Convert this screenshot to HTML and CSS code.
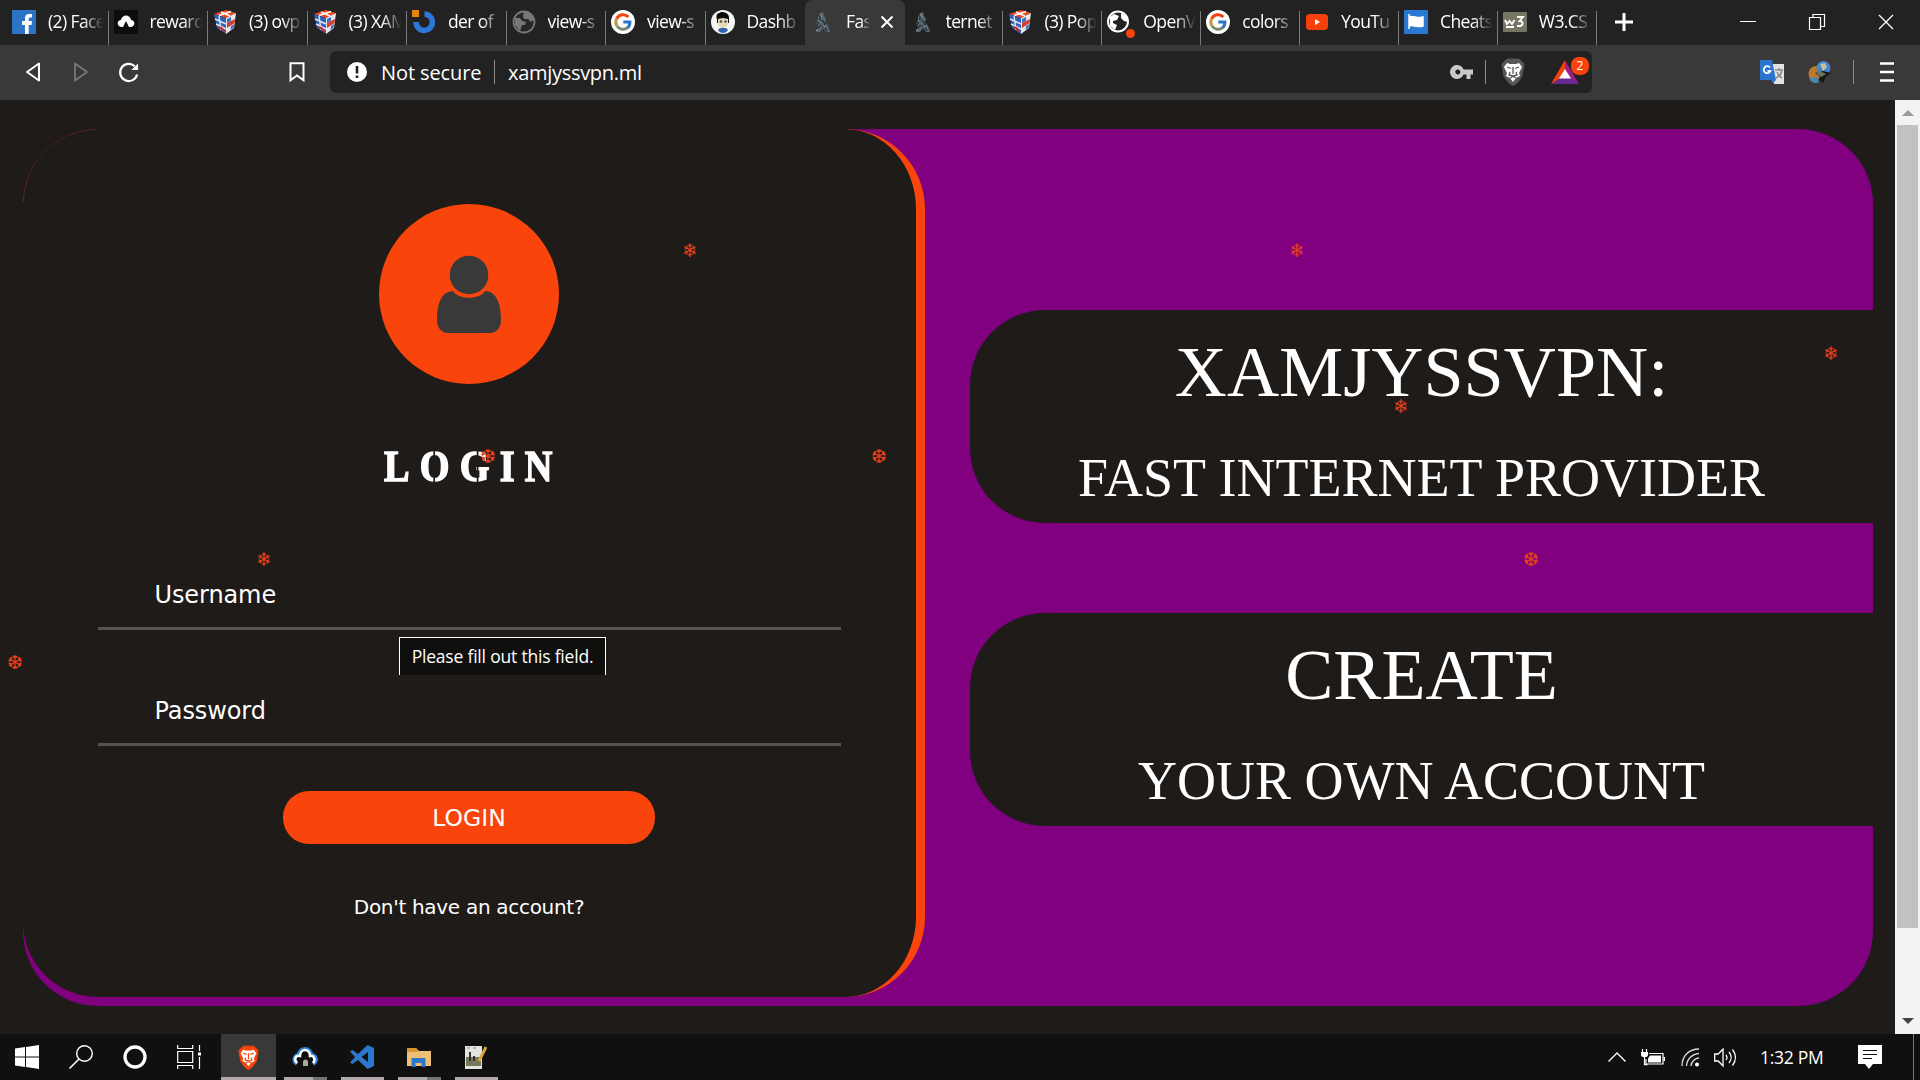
FILE: index.html
```html
<!DOCTYPE html>
<html lang="en">
<head>
    <meta charset="UTF-8">
    <meta name="viewport" content="width=device-width, initial-scale=1.0">
    <title>XAMJYSSVPN</title>
    <link rel="stylesheet" href="styles.css">
</head>
<body>
    <!-- shared icons -->
    <svg class="defs">
        <symbol id="google" viewBox="0 0 24 24">
            <circle cx="12" cy="12" r="12" fill="#fff"/>
            <path d="M5.6 8.7A7.3 7.3 0 0 1 17.4 7" fill="none" stroke="#f4430d" stroke-width="3"/>
            <path d="M5.6 8.7A7.3 7.3 0 0 0 6 16" fill="none" stroke="#c39a45" stroke-width="3"/>
            <path d="M6 16a7.3 7.3 0 0 0 10.5 1.8" fill="none" stroke="#7a8a6a" stroke-width="3"/>
            <path d="M12.3 12h6.6a7.3 7.3 0 0 1-2.4 5.8" fill="none" stroke="#2c74c9" stroke-width="3"/>
        </symbol>
        <symbol id="cube" viewBox="0 0 24 24">
            <path d="M1 4L13 0l10 3-10 5z" fill="#f4481c"/>
            <path d="M1 4l12 4v16L4 18z" fill="#2d62b8"/>
            <path d="M13 8l10-5-2 15-8 6z" fill="#e8e6ea"/>
            <path d="M8 2l9 4M6 5.500L18 1.500" stroke="#fff" stroke-width="1.600"/>
            <path d="M2 9l11 5M3 14l10 5M6 6l2 14" stroke="#dfe6f2" stroke-width="1.400"/>
            <path d="M14 13l8-4-.5 4-7.500 5z" fill="#d83a30"/>
            <path d="M14 9l4-2v4l-4 2zM18 16l3-2-.5 4-3 2z" fill="#3e70c0"/>
            <path d="M4 16l5 1 3 4v2z" fill="#c82a28"/>
        </symbol>
        <symbol id="knight" viewBox="0 0 24 24">
            <path d="M10 3l3-1 1 4 2 3-1 3 3 4 2 6h-4l-3-4-3 4H6l2-6-2-2 2-4 0-3 1-2z" fill="#596770"/>
            <path d="M10 4v6l-3 5M12 10l3 4-3 3M7 19l4-4M15 18l2 3" stroke="#2b3238" stroke-width="1.500" fill="none"/>
            <path d="M10 4l2 3M8 10l2 2M13 15l2 2M6 21l2-2" stroke="#8fa5b3" stroke-width="1"/>
        </symbol>
        <symbol id="lion" viewBox="0 0 24 28">
            <path d="M6 1h12l5 5-2 12-4 6-5 4-5-4-4-6L1 6z"/>
            <path d="M6 5l3 1h6l3-1 3 4-3 6 1 3-4 2-3 4-3-4-4-2 1-3-3-6z" fill="#fff" stroke="none"/>
            <path d="M6 9l4 1.500M18 9l-4 1.500M12 9v7M9 14l-1 3 4 1 4-1-1-3M9 20l3-1.500 3 1.500" fill="none" stroke-width="1.300"/>
        </symbol>
    </svg>

    <div class="tabs">
        <div class="tab first">
            <svg viewBox="0 0 24 24"><rect width="24" height="24" fill="#2d74c4"/><path d="M13 24v-9h-3v-4h3V8.500C13 5 15 4 17.500 4H20v3.500h-1.700c-1.300 0-1.600.6-1.600 1.600V11H20l-.5 4h-2.800v9z" fill="#fff"/></svg>
            <span>(2) Face</span>
        </div>
        <div class="tab">
            <svg viewBox="0 0 24 24"><rect width="24" height="24" fill="#0d0d0d"/><path d="M7.500 17C2 16 3 10 7 10c1-6 9-6 10 0 4 0 5 6 0 7h-2l-3-6-3 6z" fill="#fff"/></svg>
            <span>reward</span>
        </div>
        <div class="tab"><svg><use href="#cube"/></svg><span>(3) ovp</span></div>
        <div class="tab"><svg><use href="#cube"/></svg><span>(3) XAM</span></div>
        <div class="tab">
            <svg viewBox="0 0 24 24"><path d="M12.500 4A8.200 8.200 0 1 1 4 12" fill="none" stroke="#2c78d6" stroke-width="5.500"/><rect width="7" height="7" fill="#e8850c"/></svg>
            <span>der of</span>
        </div>
        <div class="tab">
            <svg viewBox="0 0 24 24"><circle cx="12" cy="12" r="10.500" fill="#262626" stroke="#777" stroke-width="1.800"/><path d="M3 8l5 0 2 3 4 1-1 3-3 0-2 6-5-6zM12 2l6 1 4 6-3 3-3-3-4 0-1-3z" fill="#777"/></svg>
            <span>view-s</span>
        </div>
        <div class="tab"><svg><use href="#google"/></svg><span>view-s</span></div>
        <div class="tab nosep">
            <svg viewBox="0 0 24 24"><circle cx="12" cy="12" r="12" fill="#f5f5f5"/><path d="M6 10C4 2 8 4 10 2c4 0 9 1 8 8v3H6z" fill="#0b0b0b"/><path d="M7 9l5-1 5 1v4a5 5 0 0 1-10 0z" fill="#e8d8b8"/><circle cx="10" cy="11.500" r="1.300" fill="#555"/><circle cx="14.500" cy="11.500" r="1.300" fill="#555"/><path d="M7 20c1-3 9-3 10 0-2 4-8 4-10 0z" fill="#2c66b0"/></svg>
            <span>Dashb</span>
        </div>
        <div class="tab active nosep">
            <svg><use href="#knight"/></svg><span>Fas</span>
            <svg class="tab-close" viewBox="0 0 14 14"><path d="M1.500 1.500l11 11M12.500 1.500l-11 11" stroke="#fff" stroke-width="2"/></svg>
        </div>
        <div class="tab"><svg><use href="#knight"/></svg><span>ternet</span></div>
        <div class="tab"><svg><use href="#cube"/></svg><span>(3) Pop</span></div>
        <div class="tab">
            <svg viewBox="0 0 24 24"><circle cx="11" cy="11.500" r="10" fill="#222" stroke="#fff" stroke-width="2"/><path d="M3 7l4-3 5 2-2 4-4 1 0 2 4 2-2 5-5-4zM14 3l5 3 2 6-4-1-3-3z" fill="#fff"/></svg>
            <i class="dot"></i>
            <span>OpenV</span>
        </div>
        <div class="tab"><svg><use href="#google"/></svg><span>colors</span></div>
        <div class="tab">
            <svg viewBox="0 0 24 24"><rect x="1" y="4" width="22" height="16" rx="4" fill="#f8400c"/><path d="M10 9l5 3-5 3z" fill="#fff"/></svg>
            <span>YouTu</span>
        </div>
        <div class="tab">
            <svg viewBox="0 0 24 24"><rect width="24" height="24" rx="1" fill="#2b78d2"/><path d="M5 4v15M5 7c4-2 8 2 14 0v9c-6 2-10-2-14 0z" fill="#fff" stroke="#fff" stroke-width="1.500"/></svg>
            <span>Cheats</span>
        </div>
        <div class="tab">
            <svg viewBox="0 0 24 24"><rect y="2" width="24" height="20" rx="1" fill="#777563"/><path d="M2 10l2 4 2.500-3 2.500 3 2.500-4M3 17h8M14 7h6l-3.500 4c5 0 4 6-2.500 5" fill="none" stroke="#fff" stroke-width="1.800"/></svg>
            <span>W3.CS</span>
        </div>
        <svg class="plus" viewBox="0 0 20 20"><path d="M10 1v18M1 10h18" stroke="#fff" stroke-width="3"/></svg>
        <div class="window-buttons">
            <svg viewBox="0 0 16 16"><path d="M0 7.500h16" stroke="#fff"/></svg>
            <svg viewBox="0 0 16 16"><path d="M.5 3.500h11v12H.500zM4 3V.500h11.500v12H12" fill="none" stroke="#fff" stroke-width="1.200"/></svg>
            <svg viewBox="0 0 16 16"><path d="M1 1l14 14M15 1L1 15" stroke="#fff" stroke-width="1.300"/></svg>
        </div>
    </div>

    <div class="toolbar">
        <div class="nav">
            <svg viewBox="0 0 16 20"><path d="M14 1.500v17L2 10z" fill="none" stroke="#fff" stroke-width="2" stroke-linejoin="round"/></svg>
            <svg class="forward" viewBox="0 0 16 20"><path d="M2 1.500v17L14 10z" fill="none" stroke="#777" stroke-width="1.800" stroke-linejoin="round"/></svg>
            <svg class="reload" viewBox="0 0 22 22"><path d="M19.500 13A9 9 0 1 1 17 4.500" fill="none" stroke="#fff" stroke-width="2.300"/><path d="M20.500 1.500v7h-7z" fill="#fff"/></svg>
            <svg class="bookmark" viewBox="0 0 16 20"><path d="M1.500 1.200h13v17L8 13.500l-6.500 4.700z" fill="none" stroke="#fff" stroke-width="2"/></svg>
        </div>
        <div class="address">
            <svg class="info" viewBox="0 0 20 20"><circle cx="10" cy="10" r="10" fill="#fff"/><path d="M10 4v7.500M10 13.500V16" stroke="#222" stroke-width="2.600"/></svg>
            <span class="secure">Not secure</span>
            <i class="line"></i>
            <span class="url">xamjyssvpn.ml</span>
            <svg class="key" viewBox="0 0 22 14"><path d="M6.500 0a7 7 0 1 0 6 9.500h3V14h4V9.500H22v-5h-9.500A7 7 0 0 0 6.500 0zm.3 4.500a2.500 2.500 0 1 1 0 5 2.500 2.500 0 0 1 0-5z" fill="#c9c9c9" fill-rule="evenodd"/></svg>
            <i class="line"></i>
            <svg class="shield"><use href="#lion"/></svg>
            <div class="rewards">
                <svg viewBox="0 0 28 24"><path d="M14 0L0 24l14-7z" fill="#f8400c"/><path d="M14 0l14 24-14-7z" fill="#971f86"/><path d="M0 24h28l-14-9z" fill="#662a91"/><path d="M14 9l6 9.500H8z" fill="#fff"/></svg>
                <b>2</b>
            </div>
        </div>
        <div class="extensions">
            <svg viewBox="0 0 24 24"><path d="M11 4h13v20H14z" fill="#e3e3e3"/><path d="M15 10h8M19 8v2M22 10c-1 5-4 7-6 8M17 12c1 3 3 5 5 6" stroke="#8a8a8a" stroke-width="1.500" fill="none"/><path d="M0 0h12l4 20-3 3-2-3H0z" fill="#2b74d0"/><path d="M10 7.500A3.500 3.500 0 1 0 10.500 11H7.500" fill="none" stroke="#fff" stroke-width="1.800"/></svg>
            <svg viewBox="0 0 24 24"><path d="M9 6C-2 6-2 20 8 22l4-5-5-4 5-3z" fill="#bd792b"/><circle cx="15.500" cy="8" r="7" fill="#4385c9"/><path d="M12 4l5-1 2 4-4 4z" fill="#cbbf9b"/><path d="M1 18c2 5 7 6 10 4l-1-5z" fill="#4a88b0"/><path d="M9 13l6-2 8 2-5 4-3 6-4-3 1-4z" fill="#161b17"/><path d="M8 13l4-2 6 3-5 3z" fill="#6d7565"/></svg>
            <i class="line"></i>
            <svg class="menu" viewBox="0 0 14 20"><path d="M0 1.500h14M0 10h14M0 18.500h14" stroke="#fff" stroke-width="2.400"/></svg>
        </div>
    </div>

    <div class="view">
        <div class="page">
            <div class="card">
                <form class="login">
                    <div class="avatar">
                        <svg viewBox="0 0 64 79"><circle cx="32" cy="20" r="19.300" fill="#393939"/><path d="M16 36C21 45 43 45 48 36c12 0 16 14 16 29 0 7-4 13-11 13H11C4 78 0 72 0 65c0-15 4-29 16-29z" fill="#393939"/></svg>
                    </div>
                    <h1>LOGIN</h1>
                    <div class="field">Username</div>
                    <div class="field">Password</div>
                    <button type="button">LOGIN</button>
                    <a>Don't have an account?</a>
                </form>
                <div class="side">
                    <div class="box">
                        <h2>XAMJYSSVPN:</h2>
                        <h3>FAST INTERNET PROVIDER</h3>
                    </div>
                    <div class="box">
                        <h2>CREATE</h2>
                        <h3>YOUR OWN ACCOUNT</h3>
                    </div>
                </div>
            </div>
            <div class="tooltip">Please fill out this field.</div>
            <i class="flake f1">❄</i>
            <i class="flake f2">❆</i>
            <i class="flake f3">❆</i>
            <i class="flake f4">❄</i>
            <i class="flake f5">❆</i>
            <i class="flake f6">❄</i>
            <i class="flake f7">❄</i>
            <i class="flake f8">❄</i>
            <i class="flake f9">❆</i>
        </div>
        <div class="scrollbar">
            <svg viewBox="0 0 12 6"><path d="M0 6l6-6 6 6z" fill="#999"/></svg>
            <div class="thumb"></div>
            <svg class="down" viewBox="0 0 12 6"><path d="M0 0h12L6 6z" fill="#444"/></svg>
        </div>
    </div>

    <div class="taskbar">
        <div class="start">
            <svg viewBox="0 0 24 24"><path d="M0 3.400L10 2v9.500H0zM11 1.900L24 0v11.500H11zM0 12.500h10V22L0 20.600zM11 12.500h13V24l-13-1.900z" fill="#fff"/></svg>
            <svg viewBox="0 0 24 24"><circle cx="15.500" cy="8.500" r="7.800" fill="none" stroke="#fff" stroke-width="1.400"/><path d="M10 14L.5 23.500" stroke="#fff" stroke-width="1.600"/></svg>
            <svg viewBox="0 0 24 24"><circle cx="12" cy="12" r="10" fill="none" stroke="#fff" stroke-width="3.300"/></svg>
            <svg viewBox="0 0 24 24"><path d="M.7 0v3.500h15V0M.7 6.500h15v11H.700zM.7 24v-3.500h15V24M22.500 0v6M22.500 12v12" fill="none" stroke="#fff" stroke-width="1.200"/><path d="M21 7.500h3v3h-3z" fill="#fff"/></svg>
        </div>
        <div class="app current"><svg class="orange"><use href="#lion"/></svg></div>
        <div class="app multi">
            <svg viewBox="0 0 24 24"><path d="M4 19C-1 15 2 10 6 10 6 2 18 2 18 10c5 0 7 6 2 9" fill="none" stroke="#3182d4" stroke-width="4"/><path d="M4 18C0 14 3 10 7 11 7 3 17 3 17 11c4-1 6 4 3 7" fill="none" stroke="#fff" stroke-width="2.500"/><path d="M10 21v-4a2.500 2.500 0 0 1 5 0v4z" fill="#aaa99d"/></svg>
        </div>
        <div class="app">
            <svg viewBox="0 0 24 24"><path d="M17.500 0L24 3v18l-6.500 3L8 15l-5.500 4L0 17.500 5 12 0 6.500 2.500 5 8 9zM18 7l-6.500 5 6.500 5z" fill="#2b78cc" fill-rule="evenodd"/></svg>
        </div>
        <div class="app multi">
            <svg viewBox="0 0 24 24"><path d="M0 3h9l3 3h12v15H0z" fill="#edc077"/><path d="M0 3h9l2 4H0z" fill="#d9962b"/><path d="M4.500 22v-9h14v9h-4v-4h-6v4z" fill="#2d78cb"/></svg>
        </div>
        <div class="app">
            <svg viewBox="0 0 24 24"><path d="M1 1h17v23H1z" fill="#e4e4df"/><path d="M2 12h15v9H2z" fill="#77775c"/><path d="M6 7v9M10 11v5" stroke="#333" stroke-width="2"/><path d="M22 2l-7 14" stroke="#d9a43b" stroke-width="3"/><path d="M3 3h3M9 3h3" stroke="#888"/></svg>
        </div>
        <div class="tray">
            <svg class="chevron" viewBox="0 0 18 10"><path d="M.5 9.500L9 1l8.500 8.500" fill="none" stroke="#fff" stroke-width="1.400"/></svg>
            <svg class="battery" viewBox="0 0 24 17"><path d="M8 4.500h14v10.500H5v-5" fill="none" stroke="#fff" stroke-width="1.200"/><path d="M9 6.500h11v7H7v-4z" fill="#fff"/><path d="M22.500 8h1.500v4h-1.500zM0 3h7v3c0 3-7 3-7 0z" fill="#fff"/><path d="M1.500 0v4M5.500 0v4M3.500 7v8.700h3" fill="none" stroke="#fff" stroke-width="1.200"/></svg>
            <svg class="wifi" viewBox="0 0 19 19"><path d="M1 18C1 8 8 1 18 1M5.500 18C6 11 11 6 18 5.500M10 18c0-4 4-8 8-8" fill="none" stroke="#ddd" stroke-width="1.300"/><circle cx="16" cy="16.500" r="2" fill="#fff"/></svg>
            <svg class="sound" viewBox="0 0 24 19"><path d="M.7 6h3.500L9 1v17l-4.800-5H.700z" fill="none" stroke="#fff" stroke-width="1.300"/><path d="M12 7q2 2.500 0 5M15 4q4.500 5.500 0 11M18.500 1.500q6 8 0 16" fill="none" stroke="#fff" stroke-width="1.300"/></svg>
            <span class="clock">1:32 PM</span>
            <svg class="notes" viewBox="0 0 24 24"><path d="M0 0h24v19H15l-4 5-4-5H0z" fill="#fff"/><path d="M5 5.500h14M5 9.500h14M5 13.500h9" stroke="#111" stroke-width="1.200"/></svg>
        </div>
    </div>
</body>
</html>
```
FILE: styles.css
```css
* {
    box-sizing: border-box;
}
body {
    margin: 0;
    height: 1080px;
    overflow: hidden;
    display: flex;
    flex-direction: column;
    background-color: #1e1b19;
    color: white;
    font-family: "Open Sans", "Noto Sans", sans-serif;
}
svg {
    display: block;
    flex: none;
    overflow: visible;
}
.defs {
    position: absolute;
    width: 0;
    height: 0;
}

/* tabs */
.tabs {
    height: 45px;
    flex: none;
    display: flex;
    align-items: center;
    background-color: #222222;
}
.tab {
    position: relative;
    width: 99.5px;
    height: 45px;
    flex: none;
    display: flex;
    align-items: center;
    padding-left: 5px;
    padding-right: 3px;
    font-size: 17.5px;
    letter-spacing: -0.6px;
    white-space: nowrap;
}
.tab::after {
    content: "";
    position: absolute;
    right: 0;
    top: 11px;
    bottom: 0;
    border-right: 1px solid #7b7b7b;
}
.tab.nosep::after {
    display: none;
}
.tab.first {
    width: 108.5px;
    padding-left: 12px;
}
.tab svg {
    width: 24px;
    height: 24px;
    margin-top: -2px;
}
.tab span {
    flex: 1;
    margin-left: 12px;
    margin-top: -3px;
    overflow: hidden;
    mask-image: linear-gradient(to right, black 60%, transparent 96%);
}
.tab.active {
    background-color: #393939;
    border-radius: 7px 7px 0 0;
    padding-right: 11px;
}
.tab.active span {
    margin-right: 9px;
}
.tab.active ~ .tab {
    width: 98.9px;
}
.tab .tab-close {
    width: 14px;
    height: 14px;
}
.dot {
    position: absolute;
    left: 24px;
    top: 29px;
    width: 9px;
    height: 9px;
    border-radius: 50%;
    background-color: #f8430c;
}
.plus {
    width: 20px;
    height: 20px;
    margin-left: 17px;
    margin-top: -1px;
}
.window-buttons {
    display: flex;
    gap: 53px;
    margin-left: auto;
    margin-right: 26px;
    margin-top: -2px;
}
.window-buttons svg {
    width: 16px;
    height: 16px;
}

/* toolbar */
.toolbar {
    height: 55px;
    flex: none;
    display: flex;
    align-items: center;
    padding-bottom: 1px;
    background-color: #393939;
}
.nav {
    width: 330px;
    display: flex;
    align-items: center;
    padding-left: 25px;
}
.nav svg {
    width: 16px;
    height: 20px;
}
.nav .forward {
    margin-left: 32px;
}
.nav .reload {
    width: 22px;
    height: 21px;
    margin-left: 29px;
}
.nav .bookmark {
    margin-left: 149px;
}
.address {
    width: 1262px;
    height: 42px;
    display: flex;
    align-items: center;
    padding-left: 17px;
    border-radius: 6px;
    background-color: #222222;
    font-size: 20px;
}
.info {
    width: 20px;
    height: 20px;
}
.secure {
    width: 101px;
    margin: 0 12px 0 14px;
    letter-spacing: -0.1px;
    white-space: nowrap;
}
.line {
    width: 1px;
    height: 24px;
    background-color: #8b8b8b;
}
.url {
    margin-left: 13px;
    letter-spacing: -0.3px;
}
.key {
    width: 22px;
    height: 14px;
    margin-left: auto;
    margin-right: 12px;
}
.shield {
    width: 24px;
    height: 28px;
    margin-left: 15px;
    fill: #57575a;
    stroke: #57575a;
}
.rewards {
    position: relative;
    margin-left: 26px;
    margin-right: 13px;
}
.rewards svg {
    width: 28px;
    height: 24px;
}
.rewards b {
    position: absolute;
    left: 20px;
    top: -3px;
    width: 18px;
    height: 18px;
    border-radius: 8px;
    background-color: #f8430c;
    font-size: 12px;
    font-weight: normal;
    line-height: 18px;
    text-align: center;
}
.extensions {
    flex: 1;
    display: flex;
    align-items: center;
    justify-content: flex-end;
    padding-right: 26px;
}
.extensions svg {
    width: 24px;
    height: 24px;
    margin-left: 24px;
}
.extensions .line {
    margin-left: 21px;
}
.extensions .menu {
    width: 14px;
    height: 20px;
    margin-left: 26px;
}

/* page */
.view {
    flex: 1;
    display: flex;
}
.page {
    position: relative;
    width: 1895px;
    padding: 29px 22px 28px 23px;
}
.card {
    display: flex;
    height: 877px;
    border-radius: 75px;
    overflow: hidden;
    background-color: #800080;
}
.login {
    position: relative;
    width: 902px;
    height: 868px;
    display: flex;
    flex-direction: column;
    align-items: center;
    padding: 75px 75px 0 74px;
    border-right: 9px solid #f9450c;
    border-radius: 75px 80px 80px 75px;
    background-color: #1e1b19;
    font-family: "DejaVu Sans", Verdana, sans-serif;
}
/* thin arc in the top left corner */
.login::before {
    content: "";
    position: absolute;
    left: 0;
    top: 0;
    width: 72px;
    height: 72px;
    border-top: 1px solid #5c2b20;
    border-left: 1px solid #5c2b20;
    border-radius: 75px 0 0 0;
}
.avatar {
    width: 180px;
    height: 180px;
    display: flex;
    justify-content: center;
    padding-top: 51px;
    border-radius: 50%;
    background-color: #f9450c;
}
.avatar svg {
    width: 64px;
    height: 79px;
}
h1 {
    position: relative;
    width: 201px;
    height: 52px;
    margin: 56px 0 80px 1px;
    font-family: "Liberation Serif", "Times New Roman", serif;
    font-size: 45px;
    line-height: 52px;
    letter-spacing: 12px;
    transform: scaleX(0.85);
    -webkit-text-stroke: 1.5px white;
    white-space: nowrap;
}
/* stencil cuts in the letters */
h1::after {
    content: "";
    position: absolute;
    left: 58px;
    top: 8px;
    width: 49px;
    height: 36px;
    border-left: 2px solid #1e1b19;
    border-right: 2px solid #1e1b19;
}
.field {
    width: 743px;
    height: 58px;
    margin-bottom: 58px;
    padding-left: 57px;
    border-bottom: 3px solid #555250;
    font-size: 24px;
    line-height: 46px;
    letter-spacing: -0.1px;
}
button {
    width: 372px;
    height: 53px;
    margin-top: -13px;
    border: none;
    border-radius: 26px;
    color: white;
    background-color: #f9450c;
    font-family: inherit;
    font-size: 23.500px;
}
.login a {
    margin-top: 49px;
    font-size: 20px;
    line-height: 28px;
    letter-spacing: -0.3px;
}
.side {
    flex: 1;
    display: flex;
    flex-direction: column;
    gap: 90px;
    padding: 181px 0 0 45px;
}
.box {
    height: 213px;
    border-radius: 75px 0 0 75px;
    background-color: #1e1b19;
    font-family: "Liberation Serif", "Times New Roman", serif;
    text-align: center;
}
.box h2 {
    margin: 20px 0 0;
    font-size: 72.2px;
    font-weight: normal;
    line-height: 84px;
}
.box h3 {
    margin: 33px 0 0;
    font-size: 54px;
    font-weight: normal;
    line-height: 62px;
}
.tooltip {
    position: absolute;
    left: 399px;
    top: 537px;
    width: 207px;
    height: 38px;
    border: 1px solid white;
    border-bottom: none;
    background-color: #0f0f0e;
    font-size: 17.500px;
    line-height: 36px;
    letter-spacing: -0.2px;
    text-align: center;
    white-space: nowrap;
}

/* falling snow, drawn over the page */
.flake {
    position: absolute;
    width: 20px;
    height: 20px;
    margin: -9px 0 0 -10px;
    font-family: "DejaVu Sans", sans-serif;
    font-size: 19px;
    font-style: normal;
    line-height: 20px;
    text-align: center;
    color: #e5401a;
}
.f1 { left: 690px; top: 149px; }
.f2 { left: 488px; top: 355px; }
.f3 { left: 879px; top: 355px; }
.f4 { left: 264px; top: 458px; }
.f5 { left: 15px; top: 561px; }
.f6 { left: 1297px; top: 149px; }
.f7 { left: 1401px; top: 305px; }
.f8 { left: 1831px; top: 252px; }
.f9 { left: 1531px; top: 458px; }

.scrollbar {
    width: 25px;
    display: flex;
    flex-direction: column;
    align-items: center;
    padding: 10px 0;
    background-color: #f3f3f3;
}
.scrollbar svg {
    width: 12px;
    height: 6px;
}
.thumb {
    width: 21px;
    height: 803px;
    margin-top: 9px;
    background-color: #c1c1c1;
}
.scrollbar .down {
    margin-top: auto;
}

/* taskbar */
.taskbar {
    height: 46px;
    flex: none;
    display: flex;
    background-color: #101010;
}
.start {
    width: 221px;
    display: flex;
    gap: 30px;
    padding: 11px 0 0 15px;
}
.start svg, .app svg {
    width: 24px;
    height: 24px;
}
.app {
    position: relative;
    width: 57px;
    display: flex;
    justify-content: center;
    padding-top: 11px;
}
.app::after {
    content: "";
    position: absolute;
    left: 8px;
    bottom: 0;
    width: 43px;
    height: 3px;
    background-color: #b0aaae;
}
.app.multi::after {
    background: linear-gradient(to right, #b0aaae 29px, #77736f 29px);
}
.app.current {
    width: 55px;
    background-color: #393939;
}
.app.current::after {
    left: 0;
    width: 55px;
}
.app .orange {
    width: 21px;
    height: 25px;
    fill: #f9450c;
    stroke: #f9450c;
}
.tray {
    flex: 1;
    display: flex;
    align-items: center;
    justify-content: flex-end;
    margin-right: 6px;
    padding-right: 31px;
    border-right: 1px solid #777;
}
.chevron {
    width: 18px;
    height: 10px;
}
.battery {
    width: 24px;
    height: 17px;
    margin-left: 15px;
}
.wifi {
    width: 19px;
    height: 19px;
    margin-left: 16px;
}
.sound {
    width: 24px;
    height: 19px;
    margin-left: 14px;
}
.clock {
    width: 64px;
    margin: 0 34px 0 22px;
    font-size: 17.500px;
    letter-spacing: -0.3px;
    white-space: nowrap;
}
.notes {
    width: 24px;
    height: 24px;
}
```
